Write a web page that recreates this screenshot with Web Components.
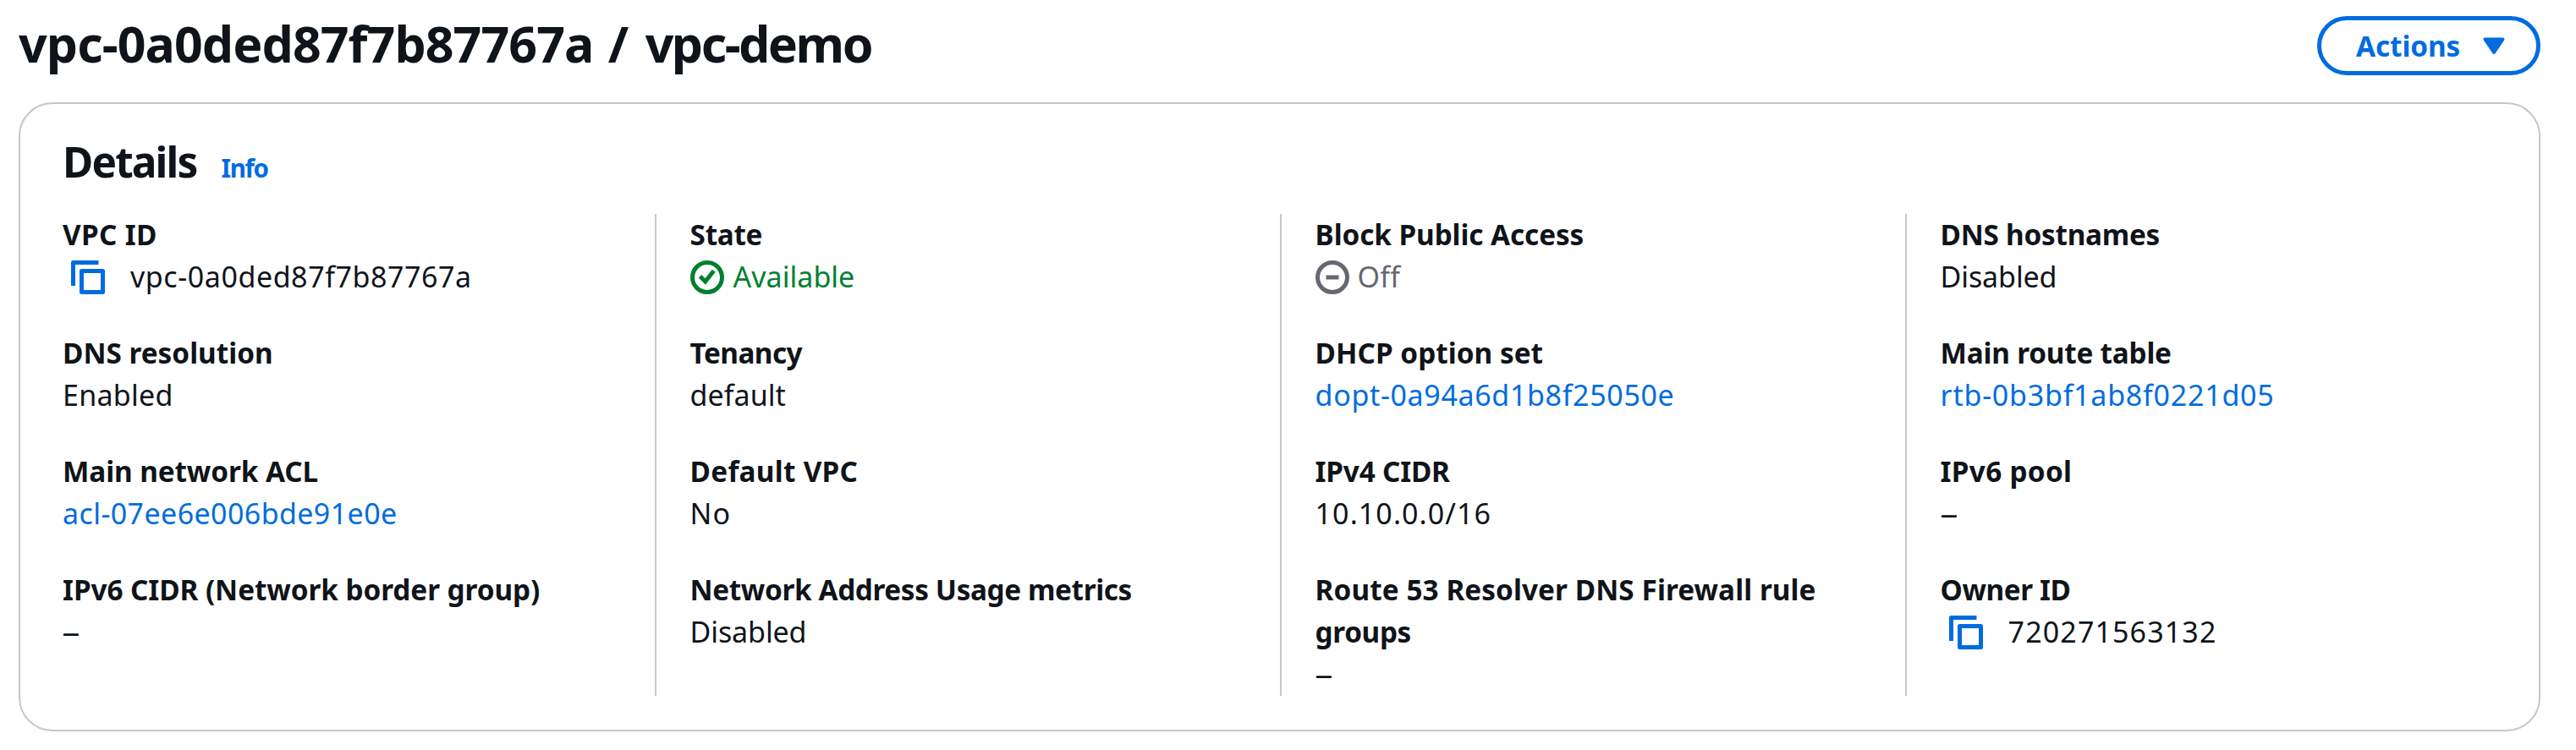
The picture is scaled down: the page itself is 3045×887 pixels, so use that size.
<!DOCTYPE html>
<html lang="en">
<head>
<meta charset="utf-8">
<title>VPC details</title>
<style>
  body { margin: 0; background: #fff; color: #0f141a; font-family: "Noto Sans", "Open Sans", sans-serif; }
</style>
</head>
<body>
<vpc-page></vpc-page>
<script>
const define = (name, html, setup) => customElements.define(name, class extends HTMLElement {
  constructor() { super(); this.attachShadow({ mode: 'open' }).innerHTML = html; }
  connectedCallback() { if (setup) setup.call(this, this.shadowRoot); }
});

// Text tracked so that its drawn extent equals the "ink" attribute (px).
const ctx = document.createElement('canvas').getContext('2d');
define('fit-text', '<style>:host{display:inline-block;white-space:nowrap}</style><slot></slot>', function () {
  const cs = getComputedStyle(this), text = this.textContent;
  ctx.font = `${cs.fontWeight} ${cs.fontSize} ${cs.fontFamily}`;
  const m = ctx.measureText(text);
  const gap = (Number(this.getAttribute('ink')) - m.actualBoundingBoxRight - m.actualBoundingBoxLeft) / (text.length - 1);
  this.style.letterSpacing = gap.toFixed(3) + 'px';
});

const icons = {
  copy: '<path d="M13 1H1v11"/><rect x="5" y="5" width="10" height="10"/>',
  ok: '<circle cx="8" cy="8" r="7"/><path stroke-linejoin="miter" d="m4.6 7.5 2.5 2.5 4-5.1"/>',
  off: '<circle cx="8" cy="8" r="7"/><path d="M5 8h6"/>'
};
define('ui-icon', `<style>:host{display:block;width:40px;height:40px;flex:none}
  svg{display:block;width:40px;height:40px;overflow:visible;fill:none;stroke:currentColor;stroke-width:2;stroke-linejoin:round}</style>
  <svg viewBox="0 0 16 16"></svg>`, function (root) {
  root.querySelector('svg').innerHTML = icons[this.getAttribute('name')];
});

define('actions-button', `<style>
  :host{display:block}
  button{box-sizing:border-box;display:flex;align-items:center;justify-content:space-between;width:264px;height:70px;margin:0;
    padding:0 37px 0 41px;border:5px solid #006ce0;border-radius:35px;background:#fff;color:#006ce0;font:700 33.3px/50px "Noto Sans",sans-serif}
  svg{display:block;width:26px;height:21px;fill:currentColor;stroke:currentColor;stroke-width:4;stroke-linejoin:round}
  </style><button><fit-text ink="122.5">Actions</fit-text><svg viewBox="0 0 26 21"><path d="M2.5 2.5h21L13 18z"/></svg></button>`);

define('page-header', `<style>
  :host{display:flex;justify-content:space-between;align-items:flex-start;height:102px}
  h1{margin:-8px 0 0;font-size:59px;line-height:80px;font-weight:700}
  </style><h1><slot></slot></h1><slot name="actions"></slot>`);

define('details-card', `<style>
  :host{display:block;box-sizing:border-box;height:744px;border:2px solid #c6c6cd;border-radius:40px;padding:0 50px}
  header{display:flex;align-items:baseline;gap:29px;height:130px;box-sizing:border-box;padding-top:33px}
  h2{margin:0;font-size:49.5px;line-height:70px}
  a{color:#006ce0;font-weight:700;font-size:29.5px;line-height:40px}
  .cols{display:grid;grid-template-columns:700px 739px 739px 1fr;height:570px}
  </style><header><h2><fit-text ink="154.5">Details</fit-text></h2><a><fit-text ink="56">Info</fit-text></a></header>
  <div class="cols"><slot></slot></div>`);

define('detail-column', `<style>
  :host{display:block;box-sizing:border-box;border-left:2px solid #c6c6cd;padding-left:39.6px}
  :host([first]){border:0;padding:0}
  div{display:grid;grid-template-rows:100px 100px 100px 150px;gap:40px;margin-top:-1px}
  </style><div><slot></slot></div>`);

define('key-value', `<style>
  :host{display:block;font-size:33.3px;line-height:50px}
  .k{font-weight:700}
  .v{display:flex;height:50px;font-size:34px}
  :host([kind=link]) .v{color:#006ce0}
  ui-icon{margin-top:6px}
  :host([icon=ok]) .v{color:#00802f}
  :host([icon=off]) .v{color:#656871}
  :host([icon=ok]) ui-icon{margin-right:11px}
  :host([icon=off]) ui-icon{margin-right:10px}
  :host([icon=copy]) ui-icon{margin:6px 30px 0 10px;color:#006ce0}
  </style><div class="k"><slot name="k"></slot></div><div class="v"><slot></slot></div>`, function (root) {
  if (this.hasAttribute('icon')) {
    const i = document.createElement('ui-icon');
    i.setAttribute('name', this.getAttribute('icon'));
    root.querySelector('.v').prepend(i);
  }
});

// [key lines with extents, value, value extent, attributes]
const columns = [
  [[[['VPC ID', 110]], 'vpc-0a0ded87f7b87767a', 401, 'icon="copy"'],
   [[['DNS resolution', 245]], 'Enabled', 125.5, ''],
   [[['Main network ACL', 298.5]], 'acl-07ee6e006bde91e0e', 393, 'kind="link"'],
   [[['IPv6 CIDR (Network border group)', 562]], '–', 0, '']],
  [[[['State', 84]], 'Available', 142.5, 'icon="ok"'],
   [[['Tenancy', 134]], 'default', 112, ''],
   [[['Default VPC', 196]], 'No', 43, ''],
   [[['Network Address Usage metrics', 519]], 'Disabled', 133, '']],
  [[[['Block Public Access', 315]], 'Off', 50, 'icon="off"'],
   [[['DHCP option set', 267]], 'dopt-0a94a6d1b8f25050e', 422, 'kind="link"'],
   [[['IPv4 CIDR', 158.5]], '10.10.0.0/16', 203, ''],
   [[['Route 53 Resolver DNS Firewall rule', 589], ['groups', 112]], '–', 0, '']],
  [[[['DNS hostnames', 257]], 'Disabled', 133, ''],
   [[['Main route table', 269.5]], 'rtb-0b3bf1ab8f0221d05', 390.7, 'kind="link"'],
   [[['IPv6 pool', 152.5]], '–', 0, ''],
   [[['Owner ID', 152]], '720271563132', 243.3, 'icon="copy"']]
];
const fit = (t, w) => w ? `<fit-text ink="${w}">${t}</fit-text>` : `<span class="dash">${t}</span>`;
define('vpc-page', `<style>:host{display:block;box-sizing:border-box;height:887px;padding:19px 42px 0 22px}
  .dash{display:block;transform:scaleX(1.25);transform-origin:3px 50%}
  .slash{margin:0 4px 0 2px}</style>
  <page-header><fit-text ink="677">vpc-0a0ded87f7b87767a</fit-text> <span class="slash">/</span> <fit-text ink="268">vpc-demo</fit-text><actions-button slot="actions"></actions-button></page-header>
  <details-card>${columns.map((c, i) => `<detail-column${i ? '' : ' first'}>${c.map(([k, v, w, a]) =>
    `<key-value ${a}><span slot="k">${k.map(([t, kw]) => fit(t, kw)).join(' ')}</span>${fit(v, w)}</key-value>`).join('')}</detail-column>`).join('')}</details-card>`);
</script>
</body>
</html>
